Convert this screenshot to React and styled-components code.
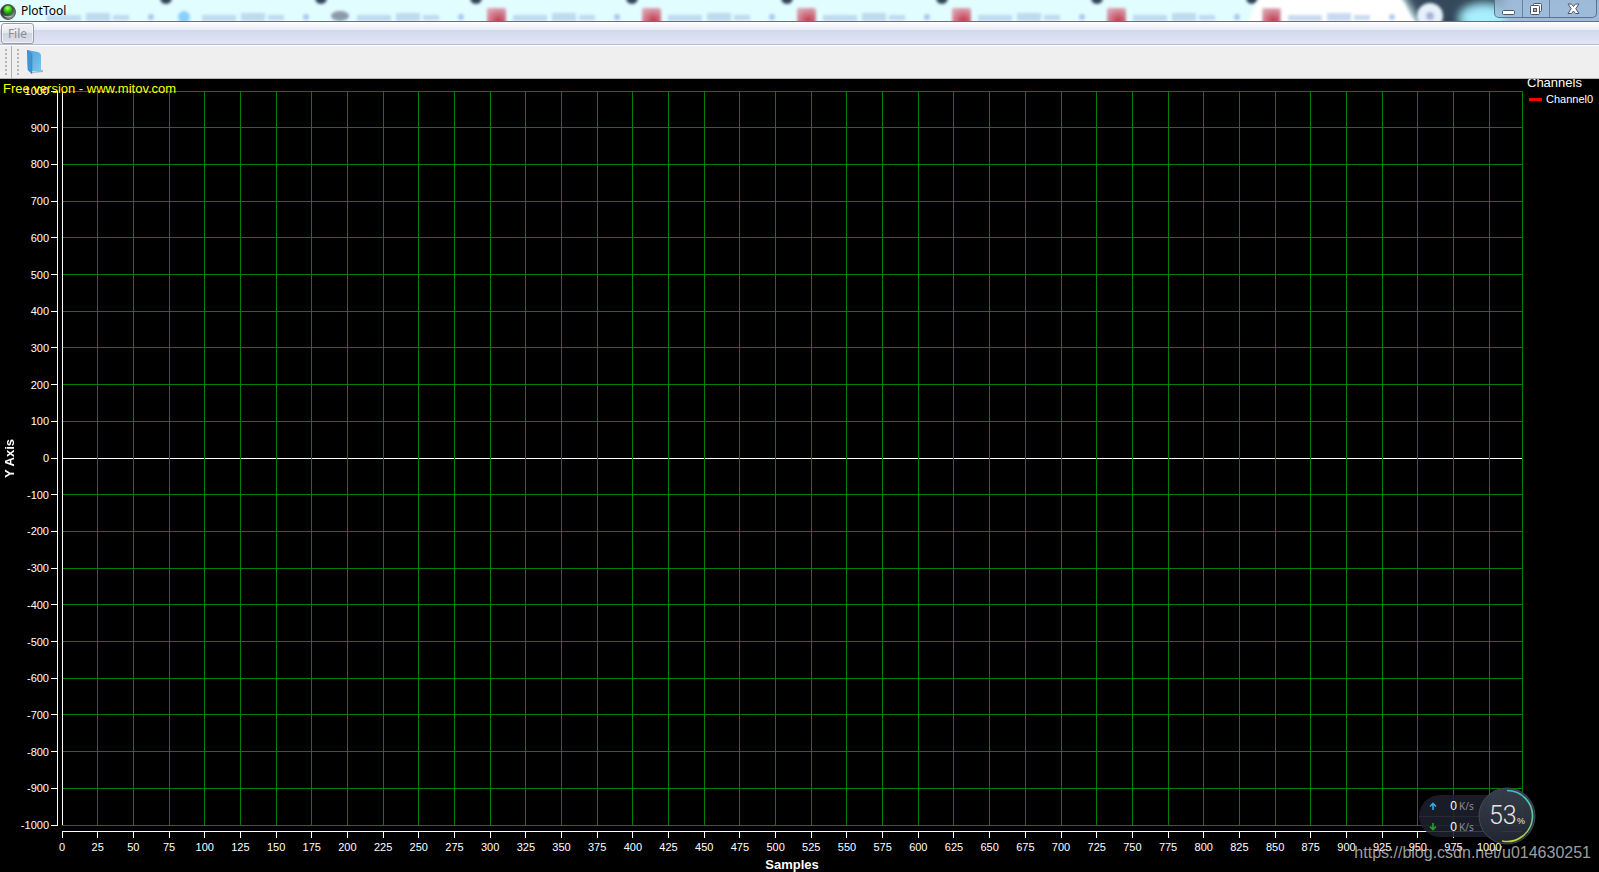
import React from "react";
import styled, { createGlobalStyle } from "styled-components";

const GlobalStyle = createGlobalStyle`
  * {
    box-sizing: border-box;
  }
  body {
    margin: 0;
    background: #000;
    font-family: "Liberation Sans", Arial, sans-serif;
  }
`;

const S = {
  Window: styled.div`
    display: flex;
    flex-direction: column;
    min-height: 100vh;
    position: relative;
    overflow: hidden;
  `,
  TitleBar: styled.header`
    position: relative;
    display: flex;
    justify-content: space-between;
    height: 22px;
    background: #e2fdff;
    border-bottom: 1px solid #6a6f7d;
    overflow: hidden;
  `,
  Glass: styled.svg`
    position: absolute;
    inset: 0;
    width: 100%;
    height: 100%;
  `,
  Caption: styled.div`
    position: relative;
    display: flex;
    align-items: center;
    gap: 5px;
  `,
  Title: styled.h1`
    margin: 0;
    font: 400 12px/20px "Noto Sans", sans-serif;
    color: #000;
  `,
  Controls: styled.div`
    position: relative;
    display: flex;
    height: 18px;
    margin-right: 2px;
    border: 1px solid #5c7286;
    border-top: 0;
    border-radius: 0 0 5px 5px;
    background: rgba(158, 187, 216, 0.75);
    overflow: hidden;
  `,
  ControlButton: styled.button`
    display: flex;
    align-items: center;
    justify-content: center;
    width: ${({ $wide }) => ($wide ? 47 : 27)}px;
    padding: 0;
    border: 0;
    border-left: ${({ $first }) => ($first ? "0" : "1px solid #6c8298")};
    background: none;
  `,
  MenuBar: styled.nav`
    height: 23px;
    padding: 1px;
    border-bottom: 1px solid #b3bcd3;
    background: linear-gradient(#fff 0, #e8ecf6 8px, #d3d9ec 8px, #e0e6f5 22px);
  `,
  MenuButton: styled.button`
    display: block;
    width: 33px;
    height: 21px;
    padding: 0;
    border: 1px solid #9a9ca3;
    border-radius: 3px;
    background: linear-gradient(#f4f5f8 0, #e5e8ef 9px, #cfd3df 9px, #dde2ee 20px);
    box-shadow: inset 0 0 0 1px rgba(255, 255, 255, 0.6);
    color: #8e8e8e;
    font: 12px/16px "Noto Sans", sans-serif;
  `,
  ToolBar: styled.div`
    display: flex;
    align-items: center;
    height: 34px;
    border-top: 1px solid #fff;
    border-bottom: 1px solid #b4b4b4;
    background: #efefef;
  `,
  Grip: styled.div`
    display: flex;
    justify-content: center;
    align-items: center;
    width: 12px;
    height: 100%;
    border-right: ${({ $edge }) => ($edge ? "1px solid #b0b0b0" : "0")};
  `,
  ToolButton: styled.button`
    display: flex;
    padding: 0 3px;
    border: 0;
    background: none;
  `,
  Chart: styled.main`
    flex: 1;
    position: relative;
    display: grid;
    grid-template-columns: 20px 42px minmax(0, 1fr) 77px;
    grid-template-rows: 12px minmax(0, 1fr) 47px;
    background: #000;
    color: #fff;
  `,
  Notice: styled.a`
    position: absolute;
    top: 2px;
    left: 3px;
    z-index: 1;
    color: #ff0;
    font-size: 13px;
    line-height: 16px;
    text-decoration: none;
  `,
  YTitle: styled.div`
    grid-area: 2 / 1;
    display: flex;
    align-items: center;
    justify-content: center;
    writing-mode: vertical-rl;
    transform: rotate(180deg);
    font-size: 13px;
    font-weight: 700;
    line-height: 16px;
  `,
  Scale: styled.svg`
    grid-area: ${({ $area }) => $area};
    display: block;
    width: 100%;
    height: 100%;
    overflow: visible;
    fill: #fff;
    font-size: 11px;
  `,
  XAxis: styled.div`
    grid-area: 3 / 3;
    display: flex;
    flex-direction: column;
    font-size: 13px;
    line-height: 15px;
    font-weight: 700;
    text-align: center;

    svg {
      height: 32px;
      font-weight: 400;
    }
  `,
  Legend: styled.aside`
    grid-area: 1 / 4 / 3 / 5;
    padding-left: 5px;
    overflow: hidden;
    font-size: 11px;

    h2 {
      margin: -4px 0 0;
      font-size: 13px;
      font-weight: 400;
      line-height: 16px;
    }
  `,
  LegendItem: styled.div`
    display: flex;
    align-items: center;
    gap: 4px;
    padding-left: 2px;
    line-height: 17px;
  `,
  Swatch: styled.span`
    width: 13px;
    height: 3px;
    background: #f00;
  `,
  Monitor: styled.div`
    position: absolute;
    right: 63px;
    bottom: 27px;
    display: flex;
    align-items: center;
    z-index: 1;
  `,
  Speeds: styled.div`
    width: 83px;
    height: 42px;
    margin-right: -24px;
    border-radius: 21px 0 0 21px;
    background: rgba(28, 32, 43, 0.88);
    color: #8a8c93;
    font-family: "Noto Sans", sans-serif;
    font-size: 10px;
  `,
  Speed: styled.div`
    display: grid;
    grid-template-columns: 12px 14px 1fr;
    gap: 2px;
    align-items: center;
    height: 21px;
    padding-left: 10px;

    & + & {
      border-top: 1px solid #252a36;
    }
    b {
      color: #fff;
      font-family: "Liberation Sans", sans-serif;
      font-size: 12px;
      font-weight: 400;
      text-align: right;
    }
  `,
  Watermark: styled.a`
    position: absolute;
    right: 8px;
    bottom: 10px;
    z-index: 2;
    color: rgba(200, 200, 200, 0.8);
    font-size: 16px;
    line-height: 18px;
    text-decoration: none;
  `,
};

const SAMPLE_MAX = 1023;
const xTicks = Array.from({ length: 41 }, (_, i) => i * 25);
const yTicks = Array.from({ length: 21 }, (_, i) => 1000 - i * 100);
const xPos = (value) => `${(value / SAMPLE_MAX) * 100}%`;
const yPos = (value) => `${(1000 - value) / 20}%`;

// left edge of every browser tab that shines through the title bar
const tabs = [10, 165, 320, 476, 631, 786, 941, 1096, 1251];

function GlassTabs() {
  return (
    <S.Glass aria-hidden="true">
      <defs>
        <filter id="soft" x="-20%" y="-50%" width="140%" height="200%">
          <feGaussianBlur stdDeviation="1.8" />
        </filter>
        <filter id="softer" x="-20%" y="-50%" width="140%" height="200%">
          <feGaussianBlur stdDeviation="4" />
        </filter>
        <radialGradient id="favicon" cx="0.6" cy="0.7" r="0.7">
          <stop offset="0" stopColor="#c23a48" />
          <stop offset="1" stopColor="#d9a0b0" />
        </radialGradient>
      </defs>
      <g filter="url(#softer)">
        <path d="M1400 -10H1620V40H1430Z" fill="#34495c" />
        <ellipse cx="1484" cy="18" rx="24" ry="13" fill="#a7eeff" />
        <path d="M1504 -5H1620V40H1504Z" fill="#9dbcdd" />
      </g>
      <g filter="url(#soft)">
        <path d="M1240 30C1256 20 1250 -5 1272 -5H1390C1410 -3 1402 15 1424 30Z" fill="#fff" />
        <circle cx="1430" cy="16" r="13" fill="#e6f1fb" />
        <circle cx="1430" cy="16" r="4" fill="#a4b2d8" />
        {tabs.map((x, i) => (
          <g key={x}>
            {i < 8 && <circle cx={x + 156} cy="-2" r="6" fill="#2f4254" />}
            {i > 2 && <rect x={x + 11} y="8" width="19" height="18" rx="2" fill="url(#favicon)" />}
            {i === 1 && <circle cx={x + 19} cy="17" r="6" fill="#8bd0fb" />}
            {i === 2 && <ellipse cx={x + 20} cy="16" rx="9" ry="5" fill="#8d99a9" />}
            <g fill="#b3cdea" opacity="0.75">
              <rect x={x + 37} y="15" width="34" height="6" />
              <rect x={x + 76} y="13" width="24" height="8" />
              <rect x={x + 103} y="15" width="16" height="5" />
            </g>
            <circle cx={x + 141} cy="17" r="3" fill="#a9c5ed" />
          </g>
        ))}
      </g>
    </S.Glass>
  );
}

function YScale() {
  return (
    <S.Scale $area="2 / 2">
      <g stroke="#fff" shapeRendering="crispEdges">
        <line x1="37.5" x2="37.5" y1="0" y2="100%" />
        {yTicks.map((value) => (
          <line key={value} x1="31" x2="38" y1={yPos(value)} y2={yPos(value)} />
        ))}
      </g>
      {yTicks.map((value) => (
        <text key={value} x="29" y={yPos(value)} dy="4" textAnchor="end">
          {value}
        </text>
      ))}
    </S.Scale>
  );
}

function PlotGrid() {
  return (
    <S.Scale $area="2 / 3">
      <g stroke="#008000" shapeRendering="crispEdges">
        {yTicks.map((value) => (
          <line
            key={value}
            x1="0"
            x2="100%"
            y1={yPos(value)}
            y2={yPos(value)}
            stroke={value === 0 ? "#fff" : "#008000"}
          />
        ))}
        {xTicks.map((value) => (
          <line
            key={value}
            x1={xPos(value)}
            x2={xPos(value)}
            y1="0"
            y2="100%"
            stroke={value === 0 ? "#fff" : "#008000"}
          />
        ))}
        <line x1="100%" x2="100%" y1="0" y2="100%" />
      </g>
    </S.Scale>
  );
}

function XScale() {
  return (
    <S.XAxis>
      <S.Scale>
        <g stroke="#fff" shapeRendering="crispEdges">
          <line x1="0" x2="100%" y1="6.5" y2="6.5" />
          {xTicks.map((value) => (
            <line key={value} x1={xPos(value)} x2={xPos(value)} y1="6" y2="13" />
          ))}
        </g>
        {xTicks.map((value) => (
          <text key={value} x={xPos(value)} y="26" textAnchor="middle">
            {value}
          </text>
        ))}
      </S.Scale>
      Samples
    </S.XAxis>
  );
}

function GripDots() {
  return (
    <svg width="4" height="28" aria-hidden="true">
      {[1, 5, 9, 13, 17, 21, 25].map((y) => (
        <rect key={y} x="1" y={y} width="2" height="2" fill="#b5b5b5" />
      ))}
    </svg>
  );
}

function AppIcon() {
  return (
    <svg width="16" height="20" viewBox="0 0 16 20" aria-hidden="true">
      <defs>
        <linearGradient id="rim" x1="0" y1="0" x2="1" y2="1">
          <stop offset="0" stopColor="#16191a" />
          <stop offset="0.6" stopColor="#4c5557" />
          <stop offset="1" stopColor="#c3cacb" />
        </linearGradient>
        <radialGradient id="lamp" cx="0.45" cy="0.3" r="0.7">
          <stop offset="0" stopColor="#b6ff6a" />
          <stop offset="0.5" stopColor="#35cf16" />
          <stop offset="1" stopColor="#0b7a08" />
        </radialGradient>
      </defs>
      <circle cx="8" cy="11" r="7.5" fill="url(#rim)" stroke="#59615f" />
      <path d="M3 14Q8 19 13 14Q8 17 3 14Z" fill="#d5dadb" />
      <circle cx="8" cy="9" r="4.600" fill="url(#lamp)" />
    </svg>
  );
}

function FolderIcon() {
  return (
    <svg width="17" height="24" viewBox="0 0 17 24" aria-hidden="true">
      <defs>
        <linearGradient id="folder" x1="0" y1="0" x2="1" y2="1">
          <stop offset="0" stopColor="#4da3dc" />
          <stop offset="1" stopColor="#7cc8ef" />
        </linearGradient>
      </defs>
      <path d="M5 22L16 20L16 22L6 23Z" fill="#a9b3ba" />
      <path d="M0 0L11 2Q14 3 14 6V19L15 21L4 21Z" fill="url(#folder)" />
      <path d="M0 0L4 3Q5 4 5 6V24L1 20Z" fill="#3e97d3" stroke="#2b82c0" strokeWidth="0.5" />
    </svg>
  );
}

function Arrow({ color, down }) {
  return (
    <svg width="8" height="8" viewBox="0 0 8 8" fill="none" stroke={color} strokeWidth="1.6">
      <path d={down ? "M4 0V6M1 3.500L4 6.500L7 3.500" : "M4 8V2M1 4.500L4 1.500L7 4.500"} />
    </svg>
  );
}

function Gauge() {
  return (
    <svg width="58" height="58" viewBox="0 0 58 58">
      <defs>
        <linearGradient id="ring" x1="0" y1="0" x2="0" y2="1">
          <stop offset="0" stopColor="#35c5c4" />
          <stop offset="0.6" stopColor="#62ce91" />
          <stop offset="1" stopColor="#c8d436" />
        </linearGradient>
        <linearGradient id="disc" x1="0" y1="0" x2="0" y2="1">
          <stop offset="0" stopColor="#3a404f" />
          <stop offset="1" stopColor="#222632" />
        </linearGradient>
      </defs>
      <circle cx="29" cy="29" r="28" fill="url(#disc)" fillOpacity="0.95" stroke="#434957" />
      <path d="M29 3.500A25.500 25.500 0 1 1 24 54" fill="none" stroke="url(#ring)" strokeWidth="1.6" />
      <text x="11" y="37" fill="#e6e6e6" fontFamily="Roboto, sans-serif" fontWeight="300" fontSize="25">
        53
      </text>
      <text x="39" y="37" fill="#e6e6e6" fontFamily="Liberation Sans, sans-serif" fontSize="9">
        %
      </text>
    </svg>
  );
}

function App() {
  return (
    <S.Window>
      <GlobalStyle />
      <S.TitleBar>
        <GlassTabs />
        <S.Caption>
          <AppIcon />
          <S.Title>PlotTool</S.Title>
        </S.Caption>
        <S.Controls>
          <S.ControlButton $first aria-label="Minimize">
            <svg width="13" height="14">
              <rect x="0.5" y="8.5" width="12" height="4" rx="1" fill="#fff" stroke="#505565" />
            </svg>
          </S.ControlButton>
          <S.ControlButton aria-label="Restore">
            <svg width="12" height="14" fill="#fff" stroke="#505565">
              <rect x="3.5" y="1.5" width="8" height="8" rx="1" />
              <rect x="0.5" y="3.5" width="9" height="9" rx="1" />
              <rect x="3.5" y="6.5" width="3" height="3" fill="#9dbcdd" />
            </svg>
          </S.ControlButton>
          <S.ControlButton $wide aria-label="Close">
            <svg width="13" height="12">
              <path
                d="M1 1H4.500L6.500 3.500L8.500 1H12L8.800 5.700L12 10.500H8.500L6.500 8L4.500 10.500H1L4.200 5.700Z"
                fill="#fff"
                stroke="#505565"
              />
            </svg>
          </S.ControlButton>
        </S.Controls>
      </S.TitleBar>
      <S.MenuBar>
        <S.MenuButton disabled>File</S.MenuButton>
      </S.MenuBar>
      <S.ToolBar>
        <S.Grip $edge>
          <GripDots />
        </S.Grip>
        <S.Grip>
          <GripDots />
        </S.Grip>
        <S.ToolButton aria-label="Open">
          <FolderIcon />
        </S.ToolButton>
      </S.ToolBar>
      <S.Chart>
        <S.Notice href="#">Free version - www.mitov.com</S.Notice>
        <S.YTitle>Y Axis</S.YTitle>
        <YScale />
        <PlotGrid />
        <XScale />
        <S.Legend>
          <h2>Channels</h2>
          <S.LegendItem>
            <S.Swatch />
            Channel0
          </S.LegendItem>
        </S.Legend>
        <S.Monitor>
          <S.Speeds>
            <S.Speed>
              <Arrow color="#37a5e6" />
              <b>0</b>K/s
            </S.Speed>
            <S.Speed>
              <Arrow color="#22a528" down />
              <b>0</b>K/s
            </S.Speed>
          </S.Speeds>
          <Gauge />
        </S.Monitor>
        <S.Watermark href="https://blog.csdn.net/u014630251">https://blog.csdn.net/u014630251</S.Watermark>
      </S.Chart>
    </S.Window>
  );
}

export default App;
